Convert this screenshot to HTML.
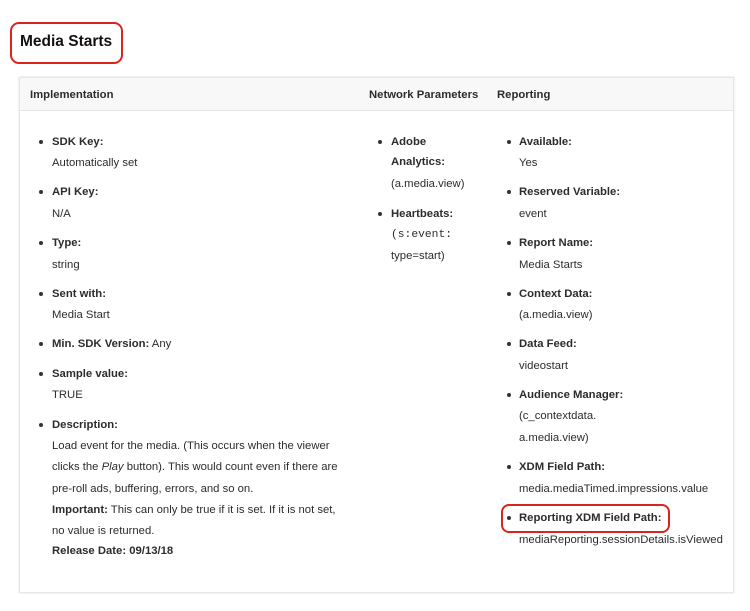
<!DOCTYPE html>
<html><head><style>
body{margin:0;width:750px;height:611px;background:#fff;font-family:"Liberation Sans",sans-serif;color:#2c2c2c;position:relative;overflow:hidden}
.a{position:absolute;font-size:11.3px;white-space:nowrap;line-height:16px}
.b{font-weight:bold}
.d{position:absolute;width:4px;height:4px;border-radius:2px;background:#333}
.m{font-family:"Liberation Mono",monospace;font-size:11.3px}
</style></head><body>
<div style="position:absolute;left:10px;top:22px;width:109px;height:38px;border:2px solid #d9261c;border-radius:9px"></div>
<div class="a b" style="left:20px;top:32px;font-size:15.5px;line-height:20px;color:#111">Media Starts</div>
<div style="position:absolute;left:19px;top:77px;width:713px;height:514px;border:1px solid #e6e6e6;box-shadow:0 0 2px #ddd"></div>
<div style="position:absolute;left:20px;top:78px;width:713px;height:32px;background:#f8f8f8;border-bottom:1px solid #e4e4e4"></div>
<div class="a b" style="left:30px;top:87px">Implementation</div>
<div class="a b" style="left:369px;top:87px">Network Parameters</div>
<div class="a b" style="left:497px;top:87px">Reporting</div>

<div class="d" style="left:39px;top:140px"></div><div class="a b" style="left:52px;top:134px">SDK Key:</div>
<div class="a" style="left:52px;top:155px">Automatically set</div>
<div class="d" style="left:39px;top:190px"></div><div class="a b" style="left:52px;top:184px">API Key:</div>
<div class="a" style="left:52px;top:206px">N/A</div>
<div class="d" style="left:39px;top:241px"></div><div class="a b" style="left:52px;top:235px">Type:</div>
<div class="a" style="left:52px;top:257px">string</div>
<div class="d" style="left:39px;top:292px"></div><div class="a b" style="left:52px;top:286px">Sent with:</div>
<div class="a" style="left:52px;top:307px">Media Start</div>
<div class="d" style="left:39px;top:342px"></div><div class="a" style="left:52px;top:336px"><b>Min. SDK Version:</b> Any</div>
<div class="d" style="left:39px;top:372px"></div><div class="a b" style="left:52px;top:366px">Sample value:</div>
<div class="a" style="left:52px;top:387px">TRUE</div>
<div class="d" style="left:39px;top:423px"></div><div class="a b" style="left:52px;top:417px">Description:</div>
<div class="a" style="left:52px;top:438px">Load event for the media. (This occurs when the viewer</div>
<div class="a" style="left:52px;top:459px">clicks the <i>Play</i> button). This would count even if there are</div>
<div class="a" style="left:52px;top:481px">pre-roll ads, buffering, errors, and so on.</div>
<div class="a" style="left:52px;top:502px"><b>Important:</b> This can only be true if it is set. If it is not set,</div>
<div class="a" style="left:52px;top:523px">no value is returned.</div>
<div class="a b" style="left:52px;top:543px">Release Date: 09/13/18</div>

<div class="d" style="left:378px;top:140px"></div><div class="a b" style="left:391px;top:134px">Adobe</div>
<div class="a b" style="left:391px;top:154px">Analytics:</div>
<div class="a" style="left:391px;top:176px">(a.media.view)</div>
<div class="d" style="left:378px;top:212px"></div><div class="a b" style="left:391px;top:206px">Heartbeats:</div>
<div class="a m" style="left:391px;top:227px">(s:event:</div>
<div class="a" style="left:391px;top:248px">type=start)</div>

<div class="d" style="left:507px;top:140px"></div><div class="a b" style="left:519px;top:134px">Available:</div>
<div class="a" style="left:519px;top:155px">Yes</div>
<div class="d" style="left:507px;top:190px"></div><div class="a b" style="left:519px;top:184px">Reserved Variable:</div>
<div class="a" style="left:519px;top:206px">event</div>
<div class="d" style="left:507px;top:241px"></div><div class="a b" style="left:519px;top:235px">Report Name:</div>
<div class="a" style="left:519px;top:257px">Media Starts</div>
<div class="d" style="left:507px;top:292px"></div><div class="a b" style="left:519px;top:286px">Context Data:</div>
<div class="a" style="left:519px;top:307px">(a.media.view)</div>
<div class="d" style="left:507px;top:342px"></div><div class="a b" style="left:519px;top:336px">Data Feed:</div>
<div class="a" style="left:519px;top:358px">videostart</div>
<div class="d" style="left:507px;top:393px"></div><div class="a b" style="left:519px;top:387px">Audience Manager:</div>
<div class="a" style="left:519px;top:408px">(c_contextdata.</div>
<div class="a" style="left:519px;top:430px">a.media.view)</div>
<div class="d" style="left:507px;top:465px"></div><div class="a b" style="left:519px;top:459px">XDM Field Path:</div>
<div class="a" style="left:519px;top:481px">media.mediaTimed.impressions.value</div>
<div style="position:absolute;left:501px;top:504px;width:165px;height:25px;border:2px solid #d9261c;border-radius:8px"></div>
<div class="d" style="left:507px;top:516px"></div><div class="a b" style="left:519px;top:510px">Reporting XDM Field Path:</div>
<div class="a" style="left:519px;top:532px">mediaReporting.sessionDetails.isViewed</div>
</body></html>
